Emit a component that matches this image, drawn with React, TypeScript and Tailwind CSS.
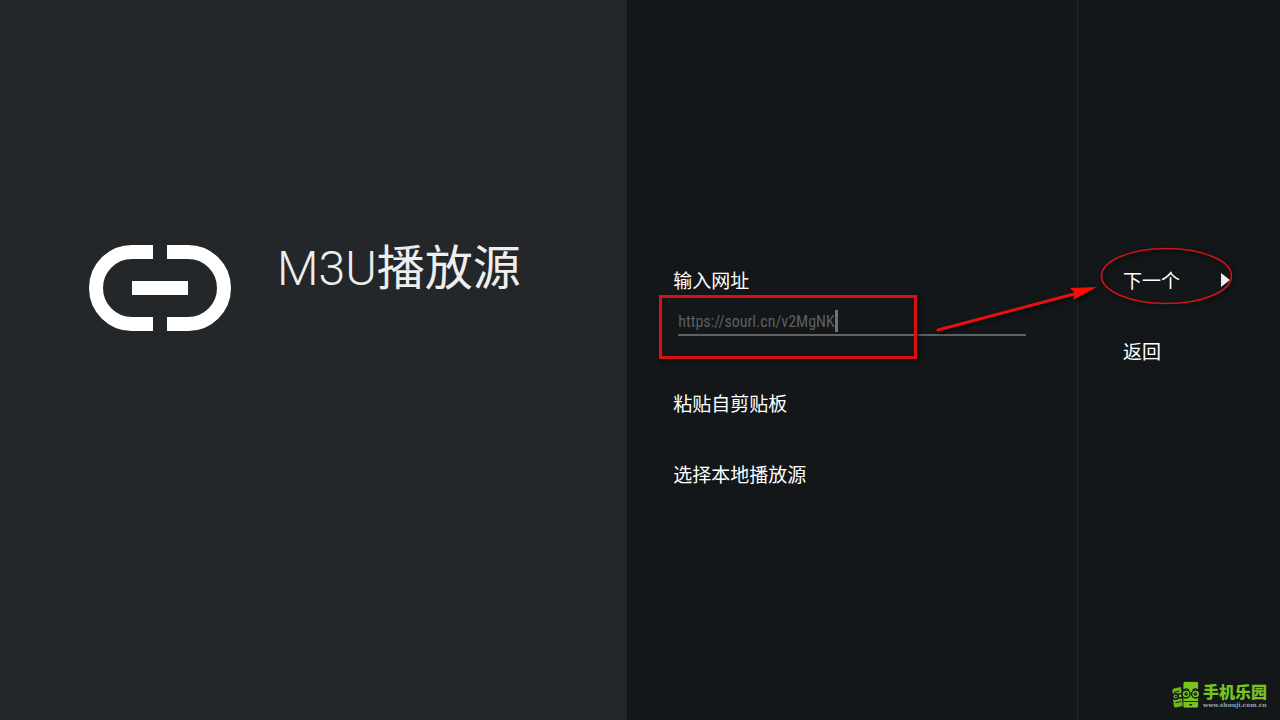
import { useState } from 'react';

const ACTIONS = ['粘贴自剪贴板', '选择本地播放源'];

function LinkIcon() {
  return (
    <svg viewBox="0 0 142 86" className="w-[142px] h-[86px] shrink-0" fill="none" stroke="#ffffff" strokeWidth="14" aria-hidden="true">
      <path d="M64 7H43a36 36 0 0 0 0 72h21" />
      <path d="M78 7h21a36 36 0 0 1 0 72H78" />
      <path d="M43 43h56" />
    </svg>
  );
}

function PhonesLogo() {
  return (
    <svg viewBox="0 0 28 28" className="w-7 h-7 shrink-0" aria-hidden="true">
      <path d="M0.5 9Q0.5 8 2 7.600L9 6 11 25 3.500 26.500Q2 26.600 1.800 25Z" fill="#6fb51f" />
      <path d="M3.500 21.800l6-1.300" stroke="#131719" strokeWidth="0.9" />
      <rect x="11" y="0.5" width="15.5" height="26.5" rx="1.8" fill="#77c41f" stroke="#131719" strokeWidth="0.8" />
      <path d="M11.500 20.500h14.500" stroke="#131719" strokeWidth="0.9" />
      <path d="M17 23h3.600L18.800 25.200Z" fill="#131719" />
      <g fill="#77c41f" stroke="#131719" strokeWidth="1.4">
        <circle cx="3.6" cy="15.5" r="2.8" />
        <circle cx="8.2" cy="14.8" r="2.2" />
        <circle cx="14" cy="13" r="4" />
        <circle cx="23.6" cy="13" r="4" />
      </g>
      <g fill="#131719">
        <circle cx="3.8" cy="15.5" r="1" />
        <circle cx="14.2" cy="13" r="1.8" />
        <circle cx="23.4" cy="13" r="1.8" />
      </g>
      <g fill="#77c41f">
        <circle cx="14.8" cy="12.6" r="0.6" />
        <circle cx="24" cy="12.6" r="0.6" />
      </g>
      <path d="M11.500 8.600q3-2 5.500 0M20.500 8.600q3-2 5.500 0M2 11.500l5-1.500" stroke="#131719" strokeWidth="1" fill="none" />
    </svg>
  );
}

function Arrow() {
  return (
    <svg
      viewBox="0 0 166 52"
      className="absolute left-[-146px] top-[282px] w-[166px] h-[52px] pointer-events-none drop-shadow-[2px_2px_2px_rgba(0,0,0,0.7)]"
      aria-hidden="true"
    >
      <path d="M6 48 142 12" stroke="#e6100f" strokeWidth="3" strokeLinecap="round" />
      <path d="M165 5 138 6 143 11 141 18Z" fill="#ff0a08" />
    </svg>
  );
}

export default function App() {
  const [url, setUrl] = useState('https://sourl.cn/v2MgNK');

  return (
    <main className="flex min-h-screen bg-[#131719] text-white text-[19px] leading-7 font-['Roboto','Noto_Sans_CJK_SC',sans-serif]">
      {/* Title */}
      <section className="w-[49%] bg-[#23272a] pl-[89px] pt-[245px] flex items-start gap-[46px]">
        <LinkIcon />
        <h1 className="text-5xl leading-12 font-light text-[#eeeeee] whitespace-nowrap">
          M3U<span className="font-normal">播放源</span>
        </h1>
      </section>

      {/* Source form */}
      <section className="flex-1 pl-[46px] pr-[51px] pt-[268px]">
        <label htmlFor="source-url" className="block">输入网址</label>
        <div className="relative ml-[5px] mt-[11px]">
          <input
            id="source-url"
            type="text"
            value={url}
            onChange={(e) => setUrl(e.target.value)}
            className="block w-full h-[29px] pt-0.5 bg-transparent border-b-2 border-[#5f6263] text-[#5c5f61] text-base outline-none font-['Roboto_Condensed','Roboto',sans-serif]"
          />
          <span className="absolute left-[157px] top-[3px] w-[3px] h-[22px] bg-[#6c7476]" />
          <div className="absolute left-[-19px] top-[-12px] w-[258px] h-16 border-3 border-[#dd1010] pointer-events-none shadow-[2px_2px_4px_rgba(0,0,0,0.6)]" />
        </div>
        <div className="mt-[55px] flex flex-col items-start gap-[43px]">
          {ACTIONS.map((label) => (
            <button key={label} type="button">{label}</button>
          ))}
        </div>
      </section>

      {/* Navigation */}
      <nav className="relative w-[203px] shrink-0 border-l border-[#22272a] pt-[268px] pl-[45px] pr-[50px] flex flex-col items-start gap-[43px]">
        <button type="button" className="relative w-full flex items-center justify-between">
          下一个
          <svg viewBox="0 0 9 18" className="w-[9px] h-[18px]" aria-hidden="true">
            <path d="M0 0 9 7 0 14Z" fill="#eeeeee" />
          </svg>
          <svg
            viewBox="0 0 132 58"
            className="absolute left-[-23px] top-[-21px] w-[132px] h-[58px] pointer-events-none drop-shadow-[2px_2px_2px_rgba(0,0,0,0.7)]"
            aria-hidden="true"
          >
            <ellipse cx="66.5" cy="29" rx="65" ry="27.5" fill="none" stroke="#cf1414" strokeWidth="1.6" />
          </svg>
        </button>
        <button type="button">返回</button>
        <Arrow />
      </nav>

      {/* Watermark */}
      <div className="absolute right-[13px] bottom-[11px] flex items-center gap-[3px]">
        <PhonesLogo />
        <div className="flex flex-col">
          <span className="text-base leading-5 font-black text-[#77c41f] font-['Noto_Sans_CJK_SC',sans-serif]">手机乐园</span>
          <span className="text-[6px] leading-2 font-bold text-[#a0a4a6] font-['DejaVu_Serif',serif]">www.shouji.com.cn</span>
        </div>
      </div>
    </main>
  );
}
